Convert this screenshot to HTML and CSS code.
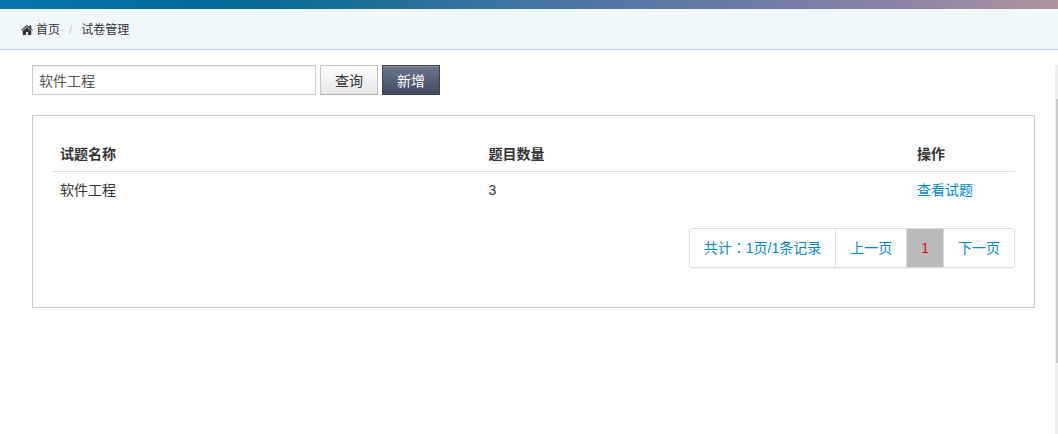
FILE: index.html
```html
<!DOCTYPE html>
<html lang="zh-CN">
<head>
<meta charset="utf-8">
<title>试卷管理</title>
<link rel="stylesheet" href="styles.css">
</head>
<body>
<header class="banner"></header>
<nav class="breadcrumb" aria-label="位置">
  <a class="crumb" href="#">
    <svg class="home-icon" viewBox="0 0 12 10" aria-hidden="true"><path d="M6 2.200 1.700 5.700v3.800q0 .5.500.5H5V7h2v3h2.800q.5 0 .5-.5V5.700z"/><path d="M11.900 5 10.200 3.500V.6H8.400v1.400L6.700.6Q6 .1 5.300.6L.1 5l.6.7L6 1.500l5.300 4.200z"/></svg>
    <span>首页</span>
  </a>
  <span class="divider">/</span>
  <a class="crumb" href="#">试卷管理</a>
</nav>
<div class="viewport">
  <main class="content">
    <form class="search">
      <input class="field" type="text" value="软件工程" aria-label="试题名称">
      <button class="btn" type="button">查询</button>
      <button class="btn btn-dark" type="button">新增</button>
    </form>
    <section class="panel">
      <table class="papers">
        <thead>
          <tr><th class="wide">试题名称</th><th class="wide">题目数量</th><th>操作</th></tr>
        </thead>
        <tbody>
          <tr><td>软件工程</td><td>3</td><td><a href="#">查看试题</a></td></tr>
        </tbody>
      </table>
      <nav class="pager" aria-label="分页">
        <ul class="pages">
          <li><a href="#">共计<span class="colon" lang="zh-TW">：</span>1页/1条记录</a></li>
          <li><a href="#">上一页</a></li>
          <li><a class="current" href="#" aria-current="page">1</a></li>
          <li><a href="#">下一页</a></li>
        </ul>
      </nav>
    </section>
  </main>
  <div class="track"><div class="thumb"></div></div>
</div>
</body>
</html>
```
FILE: styles.css
```css
* { box-sizing: border-box; }

body {
  display: flex;
  flex-direction: column;
  min-height: 100vh;
  margin: 0;
  background: #fff;
  color: #333;
  font: 14px/20px "Liberation Sans", "Noto Sans CJK SC", sans-serif;
}

a { color: #08c; text-decoration: none; }

.banner {
  height: 9px;
  background: linear-gradient(100deg, #0576ad 0%, #036b9c 18%, #0a6c98 26%, #1f6f99 36%, #4175a2 49%, #6c7aa8 70%, #8a82a6 84%, #ae949e 100%);
}

.breadcrumb {
  display: flex;
  align-items: center;
  height: 41px;
  padding: 2px 21px 0;
  background: #f0f8fc;
  border-bottom: 1px solid #b8cbd5;
  font-size: 12px;
}

.crumb {
  display: flex;
  align-items: center;
  gap: 3px;
  color: #333;
}

.home-icon { width: 12px; height: 10px; fill: #333; }

.divider { padding: 0 9px; color: #ccc; }

.viewport {
  display: flex;
  flex: 1;
  padding-top: 15px;
}

.content {
  flex: 1;
  padding: 0 20px 0 32px;
}

.search {
  display: flex;
  gap: 4px;
  margin-bottom: 20px;
}

.field {
  width: 284px;
  height: 30px;
  padding: 4px 6px;
  border: 1px solid #ccc;
  border-radius: 0;
  box-shadow: inset 0 1px 1px rgba(0, 0, 0, .08);
  color: #555;
  font: inherit;
}

.btn {
  padding: 5px 14px 3px;
  border: 1px solid #c5c5c5;
  border-bottom-color: #b3b3b3;
  background: linear-gradient(#fff, #e6e6e6);
  box-shadow: inset 0 1px 0 rgba(255, 255, 255, .2), 0 1px 2px rgba(0, 0, 0, .05);
  color: #333;
  font: inherit;
}

.btn-dark {
  border-color: #3b4252;
  background: linear-gradient(#6b7690, #424a5d);
  color: #fff;
}

.panel {
  padding: 20px 19px 39px;
  border: 1px solid #ccc;
}

.papers {
  width: 100%;
  margin-bottom: 20px;
  border-collapse: separate;
  border-spacing: 0;
  table-layout: fixed;
}

.wide { width: 44.5%; }

.papers th, .papers td { padding: 8px; text-align: left; }

.papers th {
  padding-bottom: 7px;
  border-bottom: 1px solid #ddd;
}

.pager { display: flex; justify-content: flex-end; }

.pages {
  display: flex;
  margin: 0;
  padding: 0;
  border: 1px solid #ddd;
  border-radius: 4px;
  box-shadow: 0 1px 2px rgba(0, 0, 0, .05);
  list-style: none;
}

.pages li + li { border-left: 1px solid #ddd; }

.pages a { display: block; padding: 9px 14px; }

.pages .current { background: #bababa; color: #f00; }

.colon { font-family: "Noto Sans CJK TC", sans-serif; line-height: 1; }

.track {
  width: 3px;
  padding: 34px 0 0 1px;
  background: #efefef;
}

.thumb { height: 264px; background: #cbcbcb; }
```
